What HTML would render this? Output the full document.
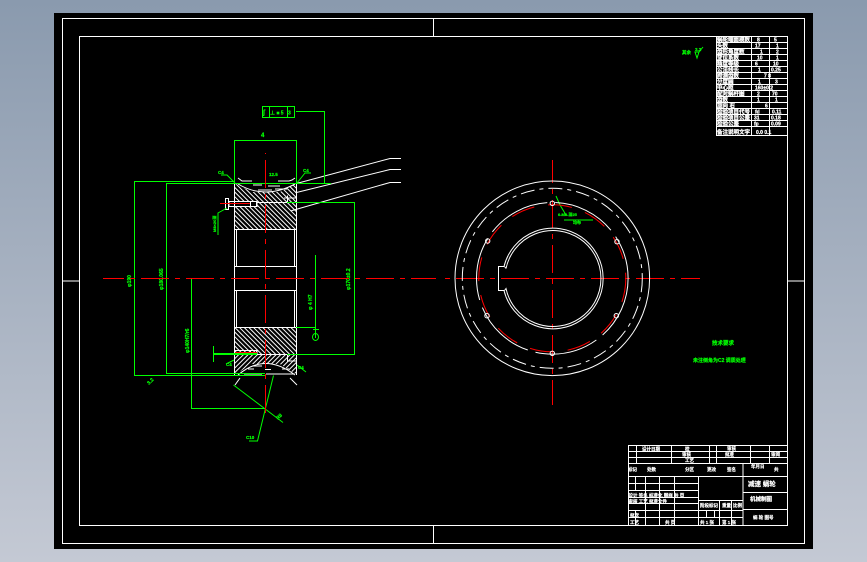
<!DOCTYPE html>
<html><head><meta charset="utf-8"><title>CAD</title>
<style>
html,body{margin:0;padding:0;width:867px;height:562px;overflow:hidden;background:#a5aebd}
svg{display:block}
text{font-family:"Liberation Sans","Noto Sans CJK SC",sans-serif}
</style></head><body>
<svg width="867" height="562" viewBox="0 0 867 562" xmlns="http://www.w3.org/2000/svg">
<defs>
<linearGradient id="bg" x1="0" y1="0" x2="0" y2="1"><stop offset="0" stop-color="#8a9aae"/><stop offset="1" stop-color="#c4c9d4"/></linearGradient>
<pattern id="fw" width="3.3" height="3.3" patternUnits="userSpaceOnUse" patternTransform="rotate(45)"><rect width="3.3" height="3.3" fill="#000"/><rect width="1" height="3.3" fill="#fff"/></pattern>
<pattern id="bk" width="3.3" height="3.3" patternUnits="userSpaceOnUse" patternTransform="rotate(-45)"><rect width="3.3" height="3.3" fill="#000"/><rect width="1" height="3.3" fill="#fff"/></pattern>
</defs>
<rect width="867" height="562" fill="url(#bg)"/>
<rect x="54" y="13" width="759" height="536" fill="#000"/>
<g fill="none" stroke="#fff" stroke-width="1">
<rect x="62.500" y="18.500" width="742" height="525"/>
<rect x="79.500" y="36.500" width="708" height="489"/>
<path d="M433.500 18V36M433.500 525V543M62 281H80M787 281H805"/>
</g>

<!-- left view body -->
<rect x="234.500" y="183" width="62" height="46" fill="url(#bk)"/>
<rect x="234.500" y="327" width="62" height="27" fill="url(#bk)"/>
<rect x="234.500" y="354" width="62" height="21" fill="url(#fw)"/>
<path d="M234 176H297V183L280 192H252L234 183Z" fill="#000"/>
<path d="M234 382H297V375L280 364H252L234 375Z" fill="#000"/>
<rect x="229" y="201" width="28" height="6" fill="#000"/>
<g fill="none" stroke="#fff" stroke-width="1">
<path d="M234.500 183V375M296.500 183V375"/>
<path d="M234.500 229.500H296.500M234.500 266.500H296.500M234.500 290.500H296.500M234.500 327.500H296.500"/>
<path d="M236.500 229.500V266.500M294.500 229.500V266.500M236.500 290.500V327.500M294.500 290.500V327.500"/>
<path d="M238 184Q265 200 295 184"/>
<path d="M238 375Q265 352 295 375"/>
<path d="M238 178L242 181H252M278 181H289L292 180L295 178M235 385L240 378M290 378L297 385"/>
<path d="M253 185H262M268 186H280M258 190H272M275 189H287M265 369.500H271M248 369H254M282 369H289M252 366H262"/>
<path d="M244 375H262M266 374H294"/>
<path d="M296.500 183.500L390 158.500H401M296.500 192.500L390 169.500H401M290.500 211L390 182.500H401"/>
<rect x="225.500" y="198.500" width="3" height="11"/>
<rect x="229" y="201.500" width="28" height="5"/>
<rect x="250.500" y="201.500" width="6" height="5"/>
<path d="M257 202.500H296M287.500 195.500V202.500H296M284 198H296"/>
<rect x="235" y="350.500" width="22" height="4"/>
<rect x="250.500" y="350.500" width="6" height="4"/>
<path d="M257 354.500H296M287.500 354V361H296"/>
</g>

<!-- green dims -->
<g fill="none" stroke="#0f0" stroke-width="1">
<rect x="262.500" y="106.500" width="32" height="11"/>
<path d="M269.500 106V118M287.500 106V118"/>
<path d="M296 111.500H324.500V183"/>
<path d="M234.500 183V140.500H296.500V183"/>
<path d="M234 181.500H134.500V375.500H265"/>
<path d="M166.500 183.500V373.500H265M166 183.500H331"/>
<path d="M191.500 279V408.500H265"/>
<path d="M287 202.500H354.500V354.500H287"/>
<path d="M315.500 255V327.500H296"/>
<path d="M233.500 385L283 422.500"/>
<path d="M273.500 375.500L257.500 441H249"/>
<path d="M218 235V213L227 208"/>
<path d="M213.500 346V362M213 353.500H257M213 354.500H257"/>
<path d="M315.500 327V338M313 329.500H319"/>
<ellipse cx="315.500" cy="337" rx="3" ry="3.500"/>
<path d="M221 175H227L235 183M297 183L305 173H311"/>
<path d="M234 360L226 364M297 365L306 372"/>
<path d="M566 215L560 205L556 196M564 220H593"/>
</g>
<g fill="#0f0" font-size="5" font-weight="bold" stroke="#0f0" stroke-width=".2">
<text x="263" y="114.500" font-size="7">∫</text><text x="270" y="114.500">⊥ ■ 5</text><text x="288" y="114.500">3</text>
<text x="261" y="137" font-size="6">4</text>
<text x="218" y="174" font-size="4.500">C4</text><text x="303" y="172" font-size="4.500">C4</text>
<text x="269" y="176" font-size="4.500">12.5</text>
<text transform="translate(216,232) rotate(-90)" font-size="4">M8×20深</text>
<text transform="translate(131,287) rotate(-90)">φ190</text>
<text transform="translate(163,290) rotate(-90)">φ180.065</text>
<text transform="translate(189,353) rotate(-90)">φ140H7/r6</text>
<text transform="translate(312,310) rotate(-90)">φ 4 H7</text>
<text transform="translate(350,290) rotate(-90)">φ170±0.2</text>
<text x="226" y="366" font-size="4.500">C4</text><text x="298" y="369" font-size="4.500">C4</text>
<text x="246" y="439" font-size="4.500">C10</text>
<text transform="translate(149,385) rotate(-45)">3.2</text>
<text transform="translate(278,420) rotate(-45)">R8</text>
<text x="558" y="216" font-size="4">6-M8-深25</text><text x="573" y="224" font-size="4">均布</text>
<text x="682" y="54" font-size="4.500">其余</text><text x="695" y="51" font-size="4.500">3.2</text>
<path d="M695 52H699L697 58Z M699 52L703 47" fill="none" stroke="#0f0" stroke-width="1"/>
<text x="712" y="345" font-size="5.500">技术要求</text>
<text x="693" y="362" font-size="5">未注倒角为C2 调质处理</text>
</g>

<!-- centerlines -->
<g fill="none" stroke="#f00" stroke-width="1">
<path d="M103 278.500H436" stroke-dasharray="28 6 5 6" stroke-dashoffset="7"/>
<path d="M443 278.500H700" stroke-dasharray="28 6 5 6" stroke-dashoffset="32"/>
<path d="M265.500 153V418" stroke-dasharray="28 6 5 6" stroke-dashoffset="38"/>
<path d="M552.500 160V405" stroke-dasharray="28 6 5 6" stroke-dashoffset="5"/>
<path d="M220 203.500H250M235 352.500H257"/>
<circle cx="552.300" cy="278.300" r="73.500" stroke-dasharray="24 14"/>
</g>

<!-- right view -->
<g fill="none" stroke="#fff" stroke-width="1">
<circle cx="552.300" cy="278.300" r="97.300"/>
<circle cx="552.300" cy="278.300" r="90" stroke-dasharray="14 5 4 5"/>
<circle cx="552.300" cy="278.300" r="75.800" stroke-dasharray="64 8"/>
<path d="M504 266.500H498.500V290.500H504A50.300 50.300 0 1 0 504 266.500"/>
<path d="M506 268.500L504.500 266.500M506 268.500A48 48 0 1 1 506 288.500L504.500 290.500"/>
<circle cx="552.300" cy="203.300" r="2.200"/><circle cx="487.700" cy="241" r="2.200"/><circle cx="617" cy="241.700" r="2.200"/>
<circle cx="487" cy="315.700" r="2.200"/><circle cx="616.300" cy="315.700" r="2.200"/><circle cx="552.300" cy="353.300" r="2.200"/>
</g>

<!-- parameters table -->
<g stroke="#fff" stroke-width="1" fill="none">
<path d="M716.500 36V135.500H787M751.500 36V135.500M769.500 36V135.500"/>
<path d="M716 42.500H787M716 48.500H787M716 54.500H787M716 60.500H787M716 66.500H787M716 72.500H787M716 78.500H787M716 84.500H787M716 90.500H787M716 96.500H787M716 102.500H787M716 108.500H787M716 114.500H787M716 120.500H787M716 126.500H787"/>
</g>
<g fill="#fff" font-size="5.500" font-weight="bold" stroke="#fff" stroke-width=".25">
<text x="717" y="41.500">蜗轮端面模数</text><text x="717" y="47.500">头数</text><text x="717" y="53.500">齿形角度数</text><text x="717" y="59.500">变位系数</text><text x="717" y="65.500">精度等级</text><text x="717" y="71.500">公法线长</text><text x="717" y="77.500">跨测齿数</text><text x="717" y="83.500">分度圆</text><text x="717" y="89.500">中心距</text><text x="717" y="95.500">配对蜗杆图</text><text x="717" y="101.500">齿数</text><text x="717" y="107.500">旋向 右</text><text x="717" y="113.500">检验项目代号</text><text x="717" y="119.500">检验项目公差</text><text x="717" y="125.500">检验公差</text><text x="717" y="134">备注说明文字</text>
<g font-size="5">
<text x="757" y="41.500">8</text><text x="774" y="41.500">5</text><text x="755" y="47.500">17</text><text x="776" y="47.500">1</text><text x="760" y="53.500">1</text><text x="776" y="53.500">2</text><text x="757" y="59.500">10</text><text x="776" y="59.500">1</text><text x="755" y="65.500">6</text><text x="773" y="65.500">10</text><text x="758" y="71.500">1</text><text x="771" y="71.500">0.25</text><text x="764" y="77.500">7 8</text><text x="758" y="83.500">1</text><text x="775" y="83.500">3</text><text x="755" y="89.500">160±0.2</text><text x="757" y="95.500">2</text><text x="772" y="95.500">70</text><text x="757" y="101.500">1</text><text x="775" y="101.500">1</text><text x="765" y="107.500">6</text><text x="755" y="113.500">fd</text><text x="772" y="113.500">0.11</text><text x="754" y="119.500">31</text><text x="771" y="119.500">0.18</text><text x="754" y="125.500">fp</text><text x="771" y="125.500">0.09</text><text x="756" y="134">0.0 0.1</text>
</g>
</g>

<!-- title block -->
<g stroke="#fff" stroke-width="1" fill="none">
<path d="M628.500 445.500H787M628 451.500H787M628 457.500H787M628 463.500H787M628.500 445V525"/>
<path d="M636.500 445V463M671.500 445V463M709.500 445V463M716.500 445V463M750.500 445V463M769.500 445V463"/>
<path d="M628 476.500H787M628 483.500H698M628 490.500H698M628 497.500H698M628 503.500H698M628 510.500H698M628 517.500H698"/>
<path d="M635.500 476V490M645.500 476V525M659.500 476V525M674.500 476V525M698.500 476V525M635.500 510V525M743 463V525"/>
<path d="M698 500.500H743M698 510.500H743M698 517.500H743M719.500 500V525M731.500 500V525M706.500 510V517M714.500 510V517"/>
<path d="M743 492.500H787M743 509.500H787"/>
</g>
<g fill="#fff" font-size="4.500" font-weight="bold" stroke="#fff" stroke-width=".2">
<text x="642" y="450.500">设计日期</text><text x="685" y="450.500">校</text><text x="727" y="450">审核</text><text x="771" y="456">审阅</text>
<text x="682" y="456">审核</text><text x="685" y="462">工艺</text><text x="725" y="456">批准</text>
<text x="628" y="471">标记</text><text x="647" y="471">处数</text><text x="685" y="471">分区</text><text x="707" y="471">更改</text><text x="727" y="471">签名</text><text x="751" y="468">年月日</text><text x="774" y="471">共</text>
<text x="628.500" y="497">设计 签名 标准化 图样 共 页</text><text x="628.500" y="503">审核 工艺 批准文件</text>
<text x="630" y="517">批次</text><text x="630" y="524">工艺</text><text x="665" y="524">共 页</text>
<text x="700" y="507">阶段标记</text><text x="722" y="507">重量</text><text x="733" y="507">比例</text>
<text x="700" y="524">共 1 张</text><text x="722" y="524">第 1 张</text>
<text x="748" y="486" font-size="6.500">减速 蜗轮</text><text x="750" y="501" font-size="5.500">机械制图</text><text x="753" y="519">蜗 轮 图号</text>
</g>
</svg>
</body></html>
